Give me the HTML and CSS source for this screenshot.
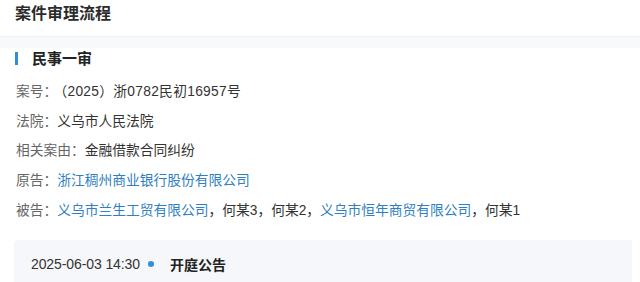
FILE: index.html
```html
<!DOCTYPE html>
<html lang="zh-CN">
<head>
    <meta charset="UTF-8">
    <title>案件审理流程</title>
    <link rel="stylesheet" href="styles.css">
</head>
<body>
    <div class="page">
        <header class="page-title">案件审理流程</header>
        <div class="divider"></div>
        <section class="stage">
            <h2 class="stage-title">民事一审</h2>
            <ul class="info-list">
                <li><span class="label">案号：</span><span class="value case-no">（2025）浙0782民初16957号</span></li>
                <li><span class="label">法院：</span><span class="value">义乌市人民法院</span></li>
                <li><span class="label">相关案由：</span><span class="value">金融借款合同纠纷</span></li>
                <li><span class="label">原告：</span><a class="link" href="#">浙江稠州商业银行股份有限公司</a></li>
                <li><span class="label">被告：</span><a class="link" href="#">义乌市兰生工贸有限公司</a><span class="value">，何某3，何某2，</span><a class="link" href="#">义乌市恒年商贸有限公司</a><span class="value">，何某1</span></li>
            </ul>
            <!-- 时间线 -->
            <div class="timeline">
                <div class="event">
                    <span class="event-time">2025-06-03 14:30</span>
                    <span class="event-dot"></span>
                    <span class="event-name">开庭公告</span>
                </div>
            </div>
        </section>
    </div>
</body>
</html>
```

FILE: styles.css
```css
body { margin: 0; background: #fff; font-family: "Liberation Sans", "Noto Sans CJK SC", sans-serif; color: #333; }
.page { width: 640px; height: 282px; overflow: hidden; background: #fff; }
.page-title { height: 36px; line-height: 28px; padding-left: 15px; font-size: 16px; font-weight: bold; color: #2b2b2b; border-bottom: 1px solid #f0f1f4; }
.divider { height: 11px; background: #f8f9fb; }
.stage { padding: 1px 8px 0 15px; }
.stage-title { position: relative; margin: 0; height: 20px; line-height: 20px; font-size: 15px; font-weight: bold; color: #222; padding-left: 17px; }
.stage-title::before { content: ""; position: absolute; left: 0; top: 3px; width: 3px; height: 13px; background: #2f8fd6; }
.info-list { list-style: none; margin: 8px 0 0; padding: 0 0 0 1px; }
.info-list li { height: 29.7px; line-height: 29.7px; font-size: 13.75px; white-space: nowrap; }
.label { color: #666; }
.value { color: #333; }
.case-no { margin-left: 3px; letter-spacing: 0.3px; }
.link { color: #2f7fc2; text-decoration: none; }
.timeline { margin: 15px 0 0 -1px; background: #f6f7fa; height: 60px; border-radius: 4px 0 0 0; }
.event { display: flex; align-items: center; padding: 16px 0 0 17px; height: 16px; }
.event-time { font-size: 14px; color: #333; letter-spacing: -0.1px; }
.event-dot { width: 6px; height: 6px; border-radius: 50%; background: #2e8fe0; margin: 0 16px 0 8px; }
.event-name { font-size: 14px; font-weight: bold; color: #222; }
```
